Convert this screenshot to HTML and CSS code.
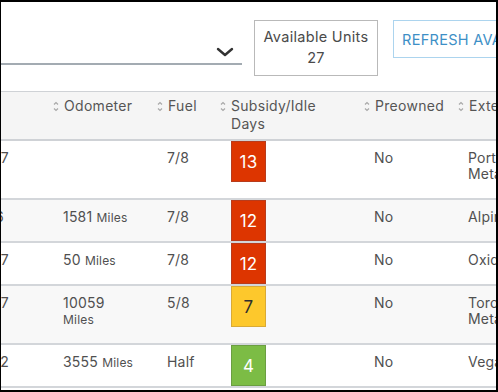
FILE: index.html
```html
<!DOCTYPE html>
<html lang="en">

<head>
    <meta charset="UTF-8">
    <meta name="viewport" content="width=device-width, initial-scale=1.0">
    <title>Inventory</title>
    <link rel="stylesheet" href="styles.css">
</head>

<body>

    <div class="frame">
        <!-- Toolbar -->
        <div class="toolbar">
            <div class="dropdown">
                <svg class="chevron" width="18" height="10" viewBox="0 0 18 10">
                    <path d="M2 2 L9 8 L16 2" fill="none" stroke="#333" stroke-width="2.4" stroke-linecap="round" stroke-linejoin="round"/>
                </svg>
            </div>
            <div class="units-box">
                <div>Available Units</div>
                <div>27</div>
            </div>
            <button class="refresh-btn">REFRESH AVAILABILITY</button>
        </div>

        <!-- Table -->
        <div class="table-wrap">
            <table class="grid">
                <colgroup>
                    <col class="w-id">
                    <col class="w-odo">
                    <col class="w-fuel">
                    <col class="w-days">
                    <col class="w-pre">
                    <col class="w-ext">
                </colgroup>
                <thead>
                    <tr>
                        <th class="col-id"><div class="th-inner"><span class="th-label">Stock</span></div></th>
                        <th><div class="th-inner"><svg class="sort" width="6" height="11" viewBox="0 0 6 11"><path d="M1 3.5 L3 1.5 L5 3.5 M1 7.5 L3 9.5 L5 7.5" fill="none" stroke="#a8a8a8" stroke-width="1.2"/></svg><span class="th-label">Odometer</span></div></th>
                        <th><div class="th-inner"><svg class="sort" width="6" height="11" viewBox="0 0 6 11"><path d="M1 3.5 L3 1.5 L5 3.5 M1 7.5 L3 9.5 L5 7.5" fill="none" stroke="#a8a8a8" stroke-width="1.2"/></svg><span class="th-label">Fuel</span></div></th>
                        <th><div class="th-inner"><svg class="sort" width="6" height="11" viewBox="0 0 6 11"><path d="M1 3.5 L3 1.5 L5 3.5 M1 7.5 L3 9.5 L5 7.5" fill="none" stroke="#a8a8a8" stroke-width="1.2"/></svg><span class="th-label th-narrow">Subsidy/Idle Days</span></div></th>
                        <th><div class="th-inner"><svg class="sort" width="6" height="11" viewBox="0 0 6 11"><path d="M1 3.5 L3 1.5 L5 3.5 M1 7.5 L3 9.5 L5 7.5" fill="none" stroke="#a8a8a8" stroke-width="1.2"/></svg><span class="th-label">Preowned</span></div></th>
                        <th><div class="th-inner"><svg class="sort" width="6" height="11" viewBox="0 0 6 11"><path d="M1 3.5 L3 1.5 L5 3.5 M1 7.5 L3 9.5 L5 7.5" fill="none" stroke="#a8a8a8" stroke-width="1.2"/></svg><span class="th-label">Exterior</span></div></th>
                    </tr>
                </thead>
                <tbody>
                    <tr>
                        <td class="col-id">2017</td>
                        <td></td>
                        <td>7/8</td>
                        <td class="col-badge"><div class="badge badge-red">13</div></td>
                        <td>No</td>
                        <td>Portofino Metallic</td>
                    </tr>
                    <tr class="alt">
                        <td class="col-id col-id-short">2016</td>
                        <td>1581 <span class="unit">Miles</span></td>
                        <td>7/8</td>
                        <td class="col-badge"><div class="badge badge-red">12</div></td>
                        <td>No</td>
                        <td>Alpine White</td>
                    </tr>
                    <tr>
                        <td class="col-id">2017</td>
                        <td>50 <span class="unit">Miles</span></td>
                        <td>7/8</td>
                        <td class="col-badge"><div class="badge badge-red">12</div></td>
                        <td>No</td>
                        <td>Oxide Grey</td>
                    </tr>
                    <tr class="alt">
                        <td class="col-id">2047</td>
                        <td>10059 <span class="unit">Miles</span></td>
                        <td>5/8</td>
                        <td class="col-badge"><div class="badge badge-yellow">7</div></td>
                        <td>No</td>
                        <td>Toronto Metallic</td>
                    </tr>
                    <tr>
                        <td class="col-id">2012</td>
                        <td>3555 <span class="unit">Miles</span></td>
                        <td>Half</td>
                        <td class="col-badge"><div class="badge badge-green">4</div></td>
                        <td>No</td>
                        <td>Vegas Yellow</td>
                    </tr>
                </tbody>
            </table>
        </div>
    </div>

</body>

</html>
```

FILE: styles.css
```css
body {
    margin: 0;
    background-color: #fff;
    font-family: "Inter", "Open Sans", sans-serif;
    color: #4f4f4f;
}

.frame {
    width: 498px;
    height: 392px;
    box-sizing: border-box;
    border: 2px solid #000;
    border-left-width: 1px;
    overflow: hidden;
    background-color: #fff;
}

/* Toolbar */
.toolbar {
    display: flex;
    align-items: flex-start;
    padding-top: 18px;
    height: 56px;
    margin-bottom: 15px;
}

.dropdown {
    flex-shrink: 0;
    width: 241px;
    height: 43px;
    border-bottom: 2px solid #a3abb2;
    display: flex;
    justify-content: flex-end;
    align-items: flex-end;
}

.chevron {
    margin-right: 8px;
    margin-bottom: 6px;
}

.units-box {
    flex-shrink: 0;
    margin-left: 12px;
    width: 124px;
    height: 56px;
    box-sizing: border-box;
    border: 1px solid #b9b9b9;
    display: flex;
    flex-direction: column;
    justify-content: center;
    align-items: center;
    font-size: 14.5px;
    letter-spacing: 0.3px;
    line-height: 21px;
    color: #4a4a4a;
    padding-bottom: 2px;
}

.refresh-btn {
    flex-shrink: 0;
    margin-left: 15px;
    height: 38px;
    padding: 0 8px;
    border: 1px solid #acd4ee;
    background-color: #fff;
    color: #3d8fc6;
    font-family: "Inter", "Open Sans", sans-serif;
    font-size: 14.5px;
    letter-spacing: 0.3px;
    white-space: nowrap;
    text-align: left;
}

/* Table */
.table-wrap {
    overflow: hidden;
}

.grid {
    border-collapse: collapse;
    table-layout: fixed;
    width: 580px;
    font-size: 14px;
    line-height: 16px;
}

.w-id { width: 45px; }
.w-odo { width: 104px; }
.w-fuel { width: 63px; }
.w-days { width: 144px; }
.w-pre { width: 94px; }
.w-ext { width: 130px; }

.grid thead tr {
    background-color: #f5f5f5;
    border-top: 1px solid #cfd2d6;
    border-bottom: 2px solid #cfd2d6;
}

.grid th {
    font-weight: normal;
    text-align: left;
    vertical-align: top;
    padding: 5px 8px 6px 7px;
    font-size: 14px;
    letter-spacing: 0.3px;
    line-height: 18px;
    color: #555;
}

.th-inner {
    display: flex;
    align-items: flex-start;
}

.sort {
    flex-shrink: 0;
    margin-top: 4px;
    margin-right: 5px;
}

.th-narrow {
    max-width: 100px;
}

.grid tbody tr {
    border-bottom: 2px solid #d3d6da;
}

.grid tbody tr.alt {
    background-color: #f8f8f8;
}

.grid td {
    vertical-align: top;
    padding: 9px 16px 16px 17px;
    color: #505050;
    letter-spacing: 0.2px;
}

.unit {
    font-size: 12px;
    line-height: 1;
}

.col-id {
    direction: rtl;
    overflow: hidden;
    white-space: nowrap;
    text-align: left;
}

.grid td.col-id {
    padding: 9px 37px 16px 0;
}

.grid td.col-id-short {
    padding-right: 42px;
}

.grid th.col-id {
    color: transparent;
}

.grid td.col-badge {
    padding: 0 0 0 18px;
}

/* Idle day badges */
.badge {
    width: 35px;
    height: 41px;
    box-sizing: border-box;
    border: 1px solid;
    display: flex;
    justify-content: center;
    align-items: center;
    font-size: 17px;
    color: #fff;
}

.badge-red {
    background-color: #dd3500;
    border-color: #b83c1c;
}

.badge-yellow {
    background-color: #fdc82c;
    border-color: #d9aa36;
    color: #2e2e2e;
}

.badge-green {
    background-color: #7cbc45;
    border-color: #6b9e42;
}
```
